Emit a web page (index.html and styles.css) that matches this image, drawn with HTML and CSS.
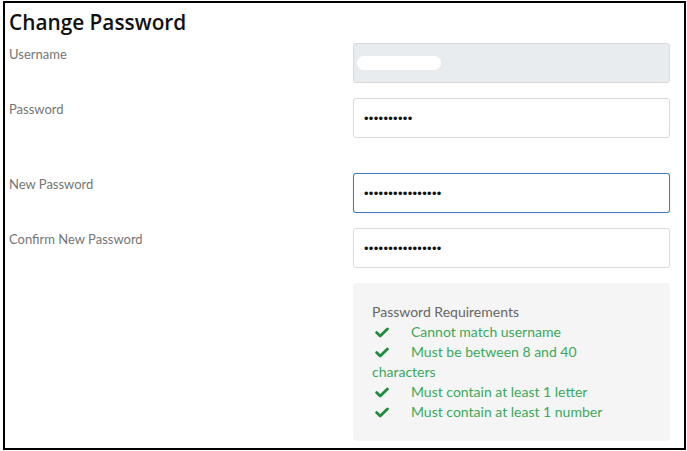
FILE: index.html
```html
<!DOCTYPE html>
<html>
<head>
<meta charset="utf-8">
<link rel="stylesheet" href="styles.css">
</head>
<body>
<div class="panel">
  <h1 class="title">Change Password</h1>
  <div class="form">
    <label class="label">Username</label>
    <div class="field field-disabled"><span class="redacted"></span></div>

    <label class="label">Password</label>
    <input class="field" type="password" value="abcdefghij">

    <label class="label label-gap">New Password</label>
    <input class="field field-focus field-gap" type="password" value="abcdefghijklmnop">

    <label class="label">Confirm New Password</label>
    <input class="field" type="password" value="abcdefghijklmnop">

    <div class="spacer"></div>
    <div class="reqs">
      <div class="reqs-title">Password Requirements</div>
      <ul class="reqs-list">
        <li><svg class="check" viewBox="0 0 14 11"><path d="M1.6 5.6 L5.2 9 L12.4 1.9" fill="none" stroke="#1e8c3a" stroke-width="2.8" stroke-linecap="round" stroke-linejoin="round"/></svg>Cannot match username</li>
        <li><svg class="check" viewBox="0 0 14 11"><path d="M1.6 5.6 L5.2 9 L12.4 1.9" fill="none" stroke="#1e8c3a" stroke-width="2.8" stroke-linecap="round" stroke-linejoin="round"/></svg>Must be between 8 and 40 characters</li>
        <li><svg class="check" viewBox="0 0 14 11"><path d="M1.6 5.6 L5.2 9 L12.4 1.9" fill="none" stroke="#1e8c3a" stroke-width="2.8" stroke-linecap="round" stroke-linejoin="round"/></svg>Must contain at least 1 letter</li>
        <li><svg class="check" viewBox="0 0 14 11"><path d="M1.6 5.6 L5.2 9 L12.4 1.9" fill="none" stroke="#1e8c3a" stroke-width="2.8" stroke-linecap="round" stroke-linejoin="round"/></svg>Must contain at least 1 number</li>
      </ul>
    </div>
  </div>
</div>
</body>
</html>
```
FILE: styles.css
```css
html, body {
  margin: 0;
  padding: 0;
  background: #fff;
}
body {
  font-family: "Lato", "Liberation Sans", sans-serif;
}
.panel {
  box-sizing: border-box;
  margin: 1px 1px 0 3px;
  width: 683px;
  height: 449px;
  border: 2px solid #000;
  padding: 6px 14px 0 4px;
}
.title {
  margin: 0;
  font-family: "Open Sans", "Lato", sans-serif;
  font-size: 20.8px;
  line-height: 26px;
  font-weight: 600;
  color: #111;
  height: 34px;
}
.form {
  display: grid;
  grid-template-columns: 1fr 317px;
  row-gap: 15px;
}
.label {
  font-size: 13px;
  line-height: 15px;
  color: #757575;
  padding-top: 4px;
}
.field {
  box-sizing: border-box;
  height: 40px;
  width: 317px;
  border: 1px solid #dadada;
  border-radius: 3px;
  background: #fff;
  padding: 0 10px;
  margin: 0;
  font-family: "Liberation Sans", sans-serif;
  font-size: 13px;
  color: #111;
  outline: none;
  letter-spacing: 0.3px;
}
.label-gap, .field-gap {
  margin-top: 20px;
}
.field-disabled {
  background: #e9ecef;
  display: flex;
  align-items: center;
  padding: 0 3px;
}
.redacted {
  display: block;
  width: 84px;
  height: 14px;
  border-radius: 7px;
  background: #fff;
}
.field-focus {
  border-color: #4477c4;
  box-shadow: 0 0 1px rgba(68, 119, 196, 0.6);
}
.reqs {
  box-sizing: border-box;
  width: 317px;
  height: 158px;
  background: #f5f5f5;
  border-radius: 4px;
  padding: 19px 40px 0 19px;
  font-size: 14px;
  line-height: 20px;
}
.reqs-title {
  color: #666;
}
.reqs-list {
  list-style: none;
  margin: 0;
  padding: 0;
  color: #3aa95a;
}
.check {
  display: inline-block;
  width: 14px;
  height: 11px;
  margin: 0 22px 0 3px;
  vertical-align: -1px;
}
```
